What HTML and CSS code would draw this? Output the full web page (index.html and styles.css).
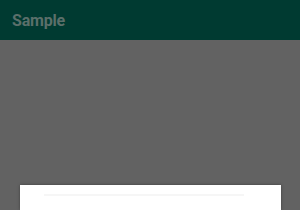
FILE: index.html
```html
<html>

<head>
    <meta charset="UTF-8">
    <meta name="viewport" content="width=device-width, initial-scale=1.0">
    <link rel="stylesheet" href="styles.css">
</head>

<body>
    <div class="appbar">
        <span class="title">Sample</span>
    </div>
    <div class="scrim">
        <div class="sheet">
            <div class="sheet-line"></div>
        </div>
    </div>
</body>

</html>
```

FILE: styles.css
```css
html, body {
    margin: 0;
    height: 100%;
    overflow: hidden;
    font-family: Roboto, "Liberation Sans", sans-serif;
}

body {
    display: flex;
    flex-direction: column;
    background-color: #626262;
}

.appbar {
    height: 40px;
    padding: 0 12px;
    display: flex;
    align-items: center;
    background-color: #003a31;
}

.appbar .title {
    font-size: 16px;
    font-weight: 700;
    letter-spacing: -0.2px;
    color: #5b6f6a;
}

.scrim {
    flex: 1;
    display: flex;
    flex-direction: column;
    justify-content: flex-end;
    padding: 0 19px 0 20px;
    background-color: #626262;
}

.sheet {
    height: 25px;
    background-color: #ffffff;
    box-shadow: 0 0 3px rgba(0, 0, 0, 0.35);
}

.sheet-line {
    margin: 9px 0 0 24px;
    width: 200px;
    height: 2px;
    background-color: #f6f6f6;
}
```
